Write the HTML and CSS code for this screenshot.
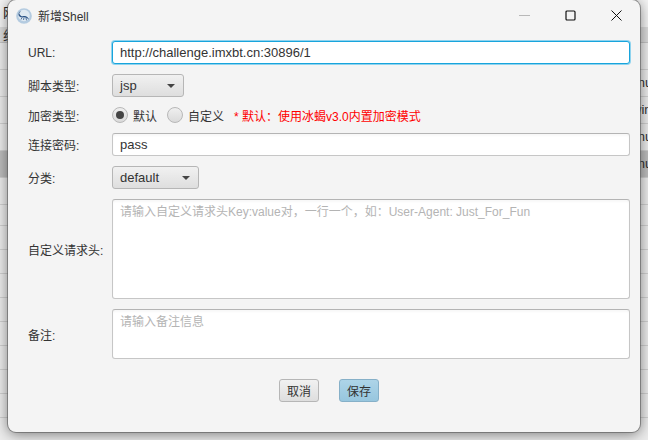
FILE: index.html
```html
<!DOCTYPE html>
<html lang="zh-CN">
<head>
    <meta charset="UTF-8">
    <title>新增Shell</title>
    <link rel="stylesheet" href="styles.css">
</head>
<body>
    <div class="backdrop">
        <div class="bg-tabs">网</div>
        <div class="bg-head">组</div>
        <div class="bg-row"></div>
        <div class="bg-row">linux</div>
        <div class="bg-row">windows</div>
        <div class="bg-row">linux</div>
        <div class="bg-row selected">linux</div>
        <div class="bg-row"></div>
        <div class="bg-row short"></div>
        <div class="bg-row small"></div>
        <div class="bg-row small"></div>
        <div class="bg-row small"></div>
        <div class="bg-row small"></div>
        <div class="bg-row small"></div>
        <div class="bg-row small"></div>
        <div class="bg-row small"></div>
        <div class="bg-row small"></div>
        <div class="bg-row small"></div>
    </div>

    <div class="dialog">
        <div class="titlebar">
            <svg class="app-icon" viewBox="0 0 16 16">
                <circle cx="8" cy="8" r="7.8" fill="#b4cbe0"/>
                <circle cx="8" cy="7.500" r="5.800" fill="#dfe9f1"/>
                <path d="M3 4.500C1.800 6.500 2.800 8.800 5 9.300c1.500.4 2.500-.2 4 .1 1.600.3 2.800 1.200 4 2.300-.6-2-2-3.300-3.800-3.600-1.500-.2-2.800.3-4-.2C4 7.400 3.400 6 3 4.500z" fill="#2f5688"/>
                <path d="M6 9.500L5 11.500M8 9.500l-.5 2.500M10 10l.5 2.300M3 4.500l1.500-.8" stroke="#2f5688" stroke-width=".8" fill="none"/>
            </svg>
            <span class="title">新增Shell</span>
            <div class="controls">
                <svg viewBox="0 0 11 11"><path d="M0 5.500h11" stroke="#b8b8b8" fill="none"/></svg>
                <svg viewBox="0 0 11 11"><rect x="1" y="1" width="9" height="9" rx="1" stroke="#111" stroke-width="1.200" fill="none"/></svg>
                <svg viewBox="0 0 11 11"><path d="M.5.500l10 10M10.500.500l-10 10" stroke="#111" stroke-width="1" fill="none"/></svg>
            </div>
        </div>
        <div class="form">
            <label>URL:</label>
            <input class="field focused" type="text" value="http://challenge.imxbt.cn:30896/1">

            <label>脚本类型:</label>
            <div class="combo combo-jsp"><span>jsp</span><i class="arrow"></i></div>

            <label>加密类型:</label>
            <div class="radios">
                <span class="radio checked"></span><span class="radio-label">默认</span>
                <span class="radio"></span><span class="radio-label">自定义</span>
                <span class="hint">* 默认：使用冰蝎v3.0内置加密模式</span>
            </div>

            <label>连接密码:</label>
            <input class="field" type="text" value="pass">

            <label>分类:</label>
            <div class="combo combo-default"><span>default</span><i class="arrow"></i></div>

            <label>自定义请求头:</label>
            <textarea class="field area-headers" placeholder="请输入自定义请求头Key:value对，一行一个，如：User-Agent: Just_For_Fun"></textarea>

            <label>备注:</label>
            <textarea class="field area-notes" placeholder="请输入备注信息"></textarea>

            <div class="buttons">
                <button>取消</button>
                <button class="primary">保存</button>
            </div>
        </div>
    </div>
</body>
</html>
```

FILE: styles.css
```css
* {
    box-sizing: border-box;
}
html, body {
    margin: 0;
    height: 100%;
    overflow: hidden;
}
body {
    position: relative;
    width: 648px;
    height: 440px;
    font-family: "Liberation Sans", "Noto Sans CJK SC", sans-serif;
    font-size: 12px;
    color: #333;
    background-color: #e4e4e4;
}

/* main window behind the dialog */
.backdrop {
    display: flex;
    flex-direction: column;
}
.bg-tabs {
    height: 27px;
    padding: 2px 0 0 3px;
    background-color: #f4f4f4;
    color: #222;
    font-size: 13px;
}
.bg-head {
    height: 16px;
    padding-left: 3px;
    background-color: #dcdcdc;
    border-bottom: 1px solid #c4c4c4;
    line-height: 18px;
    font-size: 13px;
}
.bg-row {
    height: 27px;
    padding-left: 632px;
    border-bottom: 1px solid #d0d0d0;
    line-height: 26px;
    font-size: 13px;
    color: #333;
    background-color: #ececec;
}
.bg-row.selected {
    background-color: #bdbdbd;
}
.bg-row.short {
    height: 21px;
}
.bg-row.small {
    height: 24px;
}

.dialog {
    position: absolute;
    left: 8px;
    top: 0;
    width: 632px;
    height: 432px;
    background-color: #f4f4f4;
    border-radius: 8px;
    box-shadow: 0 0 0 1px rgba(90,90,90,0.6), 0 2px 14px rgba(0,0,0,0.5);
}
.titlebar {
    display: flex;
    align-items: center;
    height: 31px;
    padding-left: 8px;
}
.app-icon {
    width: 16px;
    height: 16px;
}
.title {
    margin-left: 6px;
}
.controls {
    display: flex;
    gap: 35px;
    margin-left: auto;
    padding-right: 18px;
}
.controls svg {
    width: 11px;
    height: 11px;
}

.form {
    display: grid;
    grid-template-columns: 84px 1fr;
    grid-template-rows: 23px 23px 16px 23px 23px 100px 50px 23px;
    row-gap: 10px;
    align-items: center;
    padding: 10px 10px 0 20px;
}
label {
    color: #333;
}
.field {
    display: block;
    width: 100%;
    margin: 0;
    padding: 0 7px;
    border: 1px solid #c6c6c6;
    border-top-color: #b4b4b4;
    border-radius: 3px;
    background-color: #fff;
    color: #333;
    font: inherit;
    font-size: 13px;
    outline: none;
    box-shadow: inset 0 2px 2px rgba(0,0,0,0.03);
}
.field.focused {
    border: 1px solid #18a4dc;
    box-shadow: 0 0 0 1px #8fd3ee;
}
input.field {
    height: 23px;
}
textarea.field {
    padding: 2px 7px;
    font-size: 12px;
    resize: none;
    overflow: hidden;
}
.field::placeholder {
    color: #b4b4b4;
    opacity: 1;
}
.area-headers {
    height: 100px;
}
.area-notes {
    height: 50px;
}

.combo {
    display: flex;
    align-items: center;
    justify-content: space-between;
    height: 23px;
    padding: 0 8px 0 7px;
    border: 1px solid #b6b6b6;
    border-radius: 3px;
    background: linear-gradient(#f1f1f1, #dedede);
    font-size: 13px;
}
.combo-jsp {
    width: 72px;
}
.combo-default {
    width: 87px;
}
.arrow {
    width: 0;
    height: 0;
    border-left: 4px solid transparent;
    border-right: 4px solid transparent;
    border-top: 4px solid #444;
}

.radios {
    display: flex;
    align-items: center;
}
.radio {
    display: flex;
    align-items: center;
    justify-content: center;
    width: 16px;
    height: 16px;
    border: 1px solid #b8b8b8;
    border-radius: 50%;
    background: linear-gradient(#efefef, #dadada);
}
.radio.checked::after {
    content: "";
    width: 8px;
    height: 8px;
    border-radius: 50%;
    background-color: #444;
}
.radio-label {
    margin: 0 10px 0 5px;
}
.hint {
    color: #f00;
}

.buttons {
    grid-column: 1 / 3;
    display: flex;
    justify-content: center;
    gap: 20px;
    margin-top: 20px;
}
button {
    width: 40px;
    height: 23px;
    padding: 0;
    border: 1px solid #b6b6b6;
    border-radius: 3px;
    background: linear-gradient(#f1f1f1, #dedede);
    color: #333;
    font: inherit;
}
button.primary {
    border-color: #86b0c8;
    background: linear-gradient(#add4e8, #97c6de);
}
```
